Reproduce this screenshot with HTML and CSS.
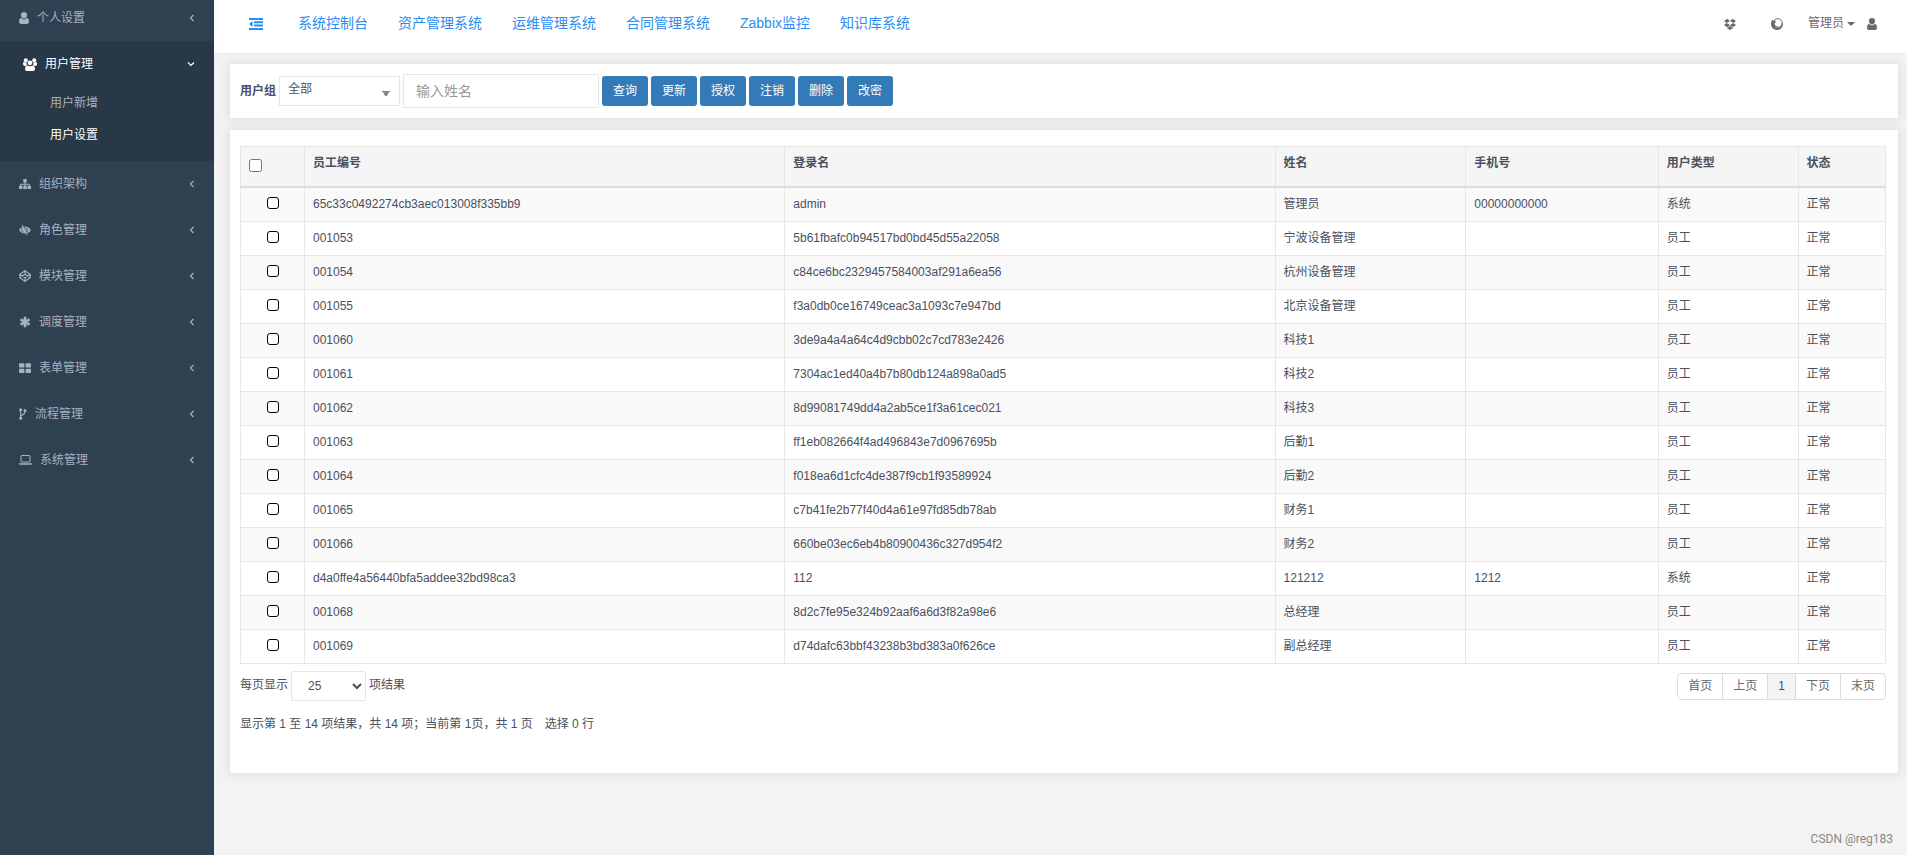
FILE: index.html
```html
<!DOCTYPE html>
<html lang="zh-CN">
<head>
<meta charset="utf-8">
<title>用户设置</title>
<link rel="stylesheet" href="styles.css">
</head>
<body>
<svg class="defs" aria-hidden="true">
  <symbol id="user" viewBox="0 0 10 12"><path d="M5 0a3 3 0 0 1 3 3.200c0 1.900-1.200 3.300-3 3.300S2 5.100 2 3.200A3 3 0 0 1 5 0zM2.200 5.700c.8 1 1.700 1.500 2.800 1.500s2-.5 2.800-1.500C9.400 6 10 7.800 10 9.800 10 11 9.300 12 8.200 12H1.800C.7 12 0 11 0 9.800 0 7.800.6 6 2.200 5.700z"/></symbol>
  <symbol id="left" viewBox="0 0 6 8"><path class="line" d="M4.500 1 1.500 4l3 3"/></symbol>
  <symbol id="down" viewBox="0 0 8 6"><path class="line" d="m1 1.500 3 3 3-3"/></symbol>
  <symbol id="users" viewBox="0 0 14 13"><circle cx="2.800" cy="2.200" r="2"/><circle cx="11.200" cy="2.200" r="2"/><path d="M0 5.800c0-1.200.4-1.700 1-1.700l2.700.5c-.3 1.200 0 2.200.4 2.700-.8.100-1.500.3-2 .8C.8 8.100 0 7.400 0 5.800zm14 0c0-1.200-.4-1.700-1-1.700l-2.700.5c.3 1.200 0 2.200-.4 2.700.8.100 1.500.3 2 .8 1.300 0 2.100-.7 2.100-2.300z"/><circle cx="7" cy="4.800" r="2.400"/><path d="M4.500 7.400c1.500 1.100 3.500 1.100 5 0 1.700.2 2.500 1.500 2.500 3.400 0 1.400-.8 2.200-2 2.200H4c-1.200 0-2-.8-2-2.200 0-1.900.8-3.200 2.500-3.400z"/></symbol>
  <symbol id="sitemap" viewBox="0 0 12 12"><path d="M4.300 1h3.400v3.400H6.500v1.300h4.200v2.100H12V11H8.500V7.800h1.200V6.700H6.500v1.100h1.200V11H4.300V7.800h1.200V6.700H2.300v1.100h1.200V11H0V7.800h1.300V5.700h4.200V4.400H4.300z"/></symbol>
  <symbol id="eye" viewBox="0 0 12 12"><path d="M0 6c1.400-2.200 3.300-3.600 6-3.600S10.600 3.800 12 6c-1.400 2.300-3.300 3.600-6 3.600S1.400 8.300 0 6z"/><path class="cut" d="m4.200.8 5 10.500M3 4.200C2.300 6 3 7.600 4.500 8.500M7.200 4c1.600.5 2 2.200 1 3.700"/><path class="thin" d="m3.200.8 5 10.500"/></symbol>
  <symbol id="codepen" viewBox="0 0 12 12"><path class="line" d="m6 .8 5.200 3.400v3.600L6 11.200.8 7.800V4.200zM6 .8v3.400m0 3.600v3.400M.8 4.200 6 7.800l5.200-3.600M.8 7.800 6 4.200l5.200 3.600"/></symbol>
  <symbol id="asterisk" viewBox="0 0 12 12"><path class="thick" d="M6 .8v10.400M1.500 3.400l9 5.200m0-5.200-9 5.200"/></symbol>
  <symbol id="large" viewBox="0 0 12 12"><path d="M.7 1.300h4c.4 0 .7.300.7.600V5c0 .3-.3.600-.7.600h-4C.3 5.600 0 5.300 0 5V1.900c0-.3.300-.6.700-.6zm6.600 0h4c.4 0 .7.300.7.600V5c0 .3-.3.600-.7.600h-4c-.4 0-.7-.3-.7-.6V1.900c0-.3.300-.6.700-.6zM.7 6.700h4c.4 0 .7.300.7.600v3.100c0 .3-.3.600-.7.600h-4c-.4 0-.7-.3-.7-.6V7.300c0-.3.300-.6.700-.6zm6.600 0h4c.4 0 .7.300.7.600v3.100c0 .3-.3.600-.7.600h-4c-.4 0-.7-.3-.7-.6V7.300c0-.3.300-.6.700-.6z"/></symbol>
  <symbol id="fork" viewBox="0 0 8 12"><path class="line" d="M1.700 2v8m4.300-7c0 3-1 3.300-2.500 4C2 7.500 1.700 8.200 1.700 9"/><circle cx="1.700" cy="1.800" r="1.500"/><circle cx="6" cy="2.500" r="1.500"/><circle cx="1.700" cy="10.200" r="1.500"/></symbol>
  <symbol id="laptop" viewBox="0 0 13 12"><path class="thin" d="M2.500 1.500h8c.3 0 .5.200.5.500v5.500c0 .3-.2.500-.5.500h-8c-.3 0-.5-.2-.5-.5V2c0-.3.200-.5.500-.5z"/><path d="M0 9.200h13v.6c0 .6-.5.900-1.200.9H1.200C.5 10.700 0 10.400 0 9.800z"/></symbol>
  <symbol id="outdent" viewBox="0 0 14 12"><path d="M0 0h14v2H0zm5 3.300h9v2H5zm0 3.300h9v2H5zM0 10h14v2H0zm3.500-7v6L0 6z"/></symbol>
  <symbol id="dropbox" viewBox="0 0 12 12"><path d="M3.400.7 6 2.900 2.600 5 0 3zm5.200 0L12 3 9.400 5 6 2.900zM2.600 5 6 7.100 3.400 9.300 0 7zm6.800 0L12 7 8.600 9.300 6 7.100zM2.700 9.500l.7.400L6 7.800l2.600 2.100.7-.4v.5L6 11.900 2.700 10z"/></symbol>
  <symbol id="firefox" viewBox="0 0 12 12"><circle class="thin" cx="6.800" cy="5" r="4.400"/><path d="M1.500 1.500 2 2.800l2.300.2.900 1-1.500 1 .1 1.500c.6 1.500 2 2.200 3.600 1.900-1 1-2.600 1-3.700.2.900 1.300 2.500 1.800 4.100 1.300 1.800-.6 3-2.200 3-4.200L12 5.300c.1 3.800-2.500 6.700-6 6.700-3.300 0-6-2.600-6-5.900C0 4.300.6 2.600 1.500 1.500z"/></symbol>
</svg>
<div class="layout">
  <aside class="sidebar">
    <nav>
      <a class="item first" href="#"><svg class="icon narrow"><use href="#user"/></svg>个人设置<svg class="chevron"><use href="#left"/></svg></a>
      <div class="group">
        <a class="item" href="#"><svg class="icon users"><use href="#users"/></svg>用户管理<svg class="chevron open"><use href="#down"/></svg></a>
        <a class="sub" href="#">用户新增</a>
        <a class="sub current" href="#">用户设置</a>
      </div>
      <a class="item" href="#"><svg class="icon"><use href="#sitemap"/></svg>组织架构<svg class="chevron"><use href="#left"/></svg></a>
      <a class="item" href="#"><svg class="icon"><use href="#eye"/></svg>角色管理<svg class="chevron"><use href="#left"/></svg></a>
      <a class="item" href="#"><svg class="icon"><use href="#codepen"/></svg>模块管理<svg class="chevron"><use href="#left"/></svg></a>
      <a class="item" href="#"><svg class="icon"><use href="#asterisk"/></svg>调度管理<svg class="chevron"><use href="#left"/></svg></a>
      <a class="item" href="#"><svg class="icon"><use href="#large"/></svg>表单管理<svg class="chevron"><use href="#left"/></svg></a>
      <a class="item" href="#"><svg class="icon slim"><use href="#fork"/></svg>流程管理<svg class="chevron"><use href="#left"/></svg></a>
      <a class="item" href="#"><svg class="icon laptop"><use href="#laptop"/></svg>系统管理<svg class="chevron"><use href="#left"/></svg></a>
    </nav>
  </aside>
  <div class="page">
    <header class="topbar">
      <button class="toggle" type="button" aria-label="收起菜单"><svg class="icon wide"><use href="#outdent"/></svg></button>
      <nav class="systems">
        <a href="#">系统控制台</a><a href="#">资产管理系统</a><a href="#">运维管理系统</a><a href="#">合同管理系统</a><a href="#">Zabbix监控</a><a href="#">知识库系统</a>
      </nav>
      <div class="tools">
        <a href="#" aria-label="消息"><svg class="icon"><use href="#dropbox"/></svg></a>
        <a href="#" aria-label="浏览"><svg class="icon"><use href="#firefox"/></svg></a>
        <a class="account" href="#">管理员<span class="caret"></span><svg class="icon narrow"><use href="#user"/></svg></a>
      </div>
    </header>
    <main class="content">
      <form class="panel filters">
        <label for="group">用户组</label>
        <select class="group-select" id="group"><option>全部</option></select>
        <input class="name-input" type="text" placeholder="输入姓名" aria-label="输入姓名">
        <button type="button">查询</button>
        <button type="button">更新</button>
        <button type="button">授权</button>
        <button type="button">注销</button>
        <button type="button">删除</button>
        <button type="button">改密</button>
      </form>
      <section class="panel listing">
        <table>
          <colgroup><col class="c-check"><col class="c-no"><col class="c-login"><col class="c-name"><col class="c-phone"><col class="c-type"><col class="c-state"></colgroup>
          <thead><tr><th><input type="checkbox" aria-label="全选"></th><th>员工编号</th><th>登录名</th><th>姓名</th><th>手机号</th><th>用户类型</th><th>状态</th></tr></thead>
          <tbody>
            <tr><td><input type="checkbox" aria-label="选择"></td><td>65c33c0492274cb3aec013008f335bb9</td><td>admin</td><td>管理员</td><td>00000000000</td><td>系统</td><td>正常</td></tr>
            <tr><td><input type="checkbox" aria-label="选择"></td><td>001053</td><td>5b61fbafc0b94517bd0bd45d55a22058</td><td>宁波设备管理</td><td></td><td>员工</td><td>正常</td></tr>
            <tr><td><input type="checkbox" aria-label="选择"></td><td>001054</td><td>c84ce6bc2329457584003af291a6ea56</td><td>杭州设备管理</td><td></td><td>员工</td><td>正常</td></tr>
            <tr><td><input type="checkbox" aria-label="选择"></td><td>001055</td><td>f3a0db0ce16749ceac3a1093c7e947bd</td><td>北京设备管理</td><td></td><td>员工</td><td>正常</td></tr>
            <tr><td><input type="checkbox" aria-label="选择"></td><td>001060</td><td>3de9a4a4a64c4d9cbb02c7cd783e2426</td><td>科技1</td><td></td><td>员工</td><td>正常</td></tr>
            <tr><td><input type="checkbox" aria-label="选择"></td><td>001061</td><td>7304ac1ed40a4b7b80db124a898a0ad5</td><td>科技2</td><td></td><td>员工</td><td>正常</td></tr>
            <tr><td><input type="checkbox" aria-label="选择"></td><td>001062</td><td>8d99081749dd4a2ab5ce1f3a61cec021</td><td>科技3</td><td></td><td>员工</td><td>正常</td></tr>
            <tr><td><input type="checkbox" aria-label="选择"></td><td>001063</td><td>ff1eb082664f4ad496843e7d0967695b</td><td>后勤1</td><td></td><td>员工</td><td>正常</td></tr>
            <tr><td><input type="checkbox" aria-label="选择"></td><td>001064</td><td>f018ea6d1cfc4de387f9cb1f93589924</td><td>后勤2</td><td></td><td>员工</td><td>正常</td></tr>
            <tr><td><input type="checkbox" aria-label="选择"></td><td>001065</td><td>c7b41fe2b77f40d4a61e97fd85db78ab</td><td>财务1</td><td></td><td>员工</td><td>正常</td></tr>
            <tr><td><input type="checkbox" aria-label="选择"></td><td>001066</td><td>660be03ec6eb4b80900436c327d954f2</td><td>财务2</td><td></td><td>员工</td><td>正常</td></tr>
            <tr><td><input type="checkbox" aria-label="选择"></td><td>d4a0ffe4a56440bfa5addee32bd98ca3</td><td>112</td><td>121212</td><td>1212</td><td>系统</td><td>正常</td></tr>
            <tr><td><input type="checkbox" aria-label="选择"></td><td>001068</td><td>8d2c7fe95e324b92aaf6a6d3f82a98e6</td><td>总经理</td><td></td><td>员工</td><td>正常</td></tr>
            <tr><td><input type="checkbox" aria-label="选择"></td><td>001069</td><td>d74dafc63bbf43238b3bd383a0f626ce</td><td>副总经理</td><td></td><td>员工</td><td>正常</td></tr>
          </tbody>
        </table>
        <div class="table-foot">
          <div class="length"><label for="length">每页显示</label><select id="length"><option>25</option></select><span>项结果</span></div>
          <nav class="pages" aria-label="分页"><a href="#">首页</a><a href="#">上页</a><a class="active" href="#">1</a><a href="#">下页</a><a href="#">末页</a></nav>
        </div>
        <p class="summary">显示第 1 至 14 项结果，共 14 项；当前第 1页，共 1 页<span>选择 0 行</span></p>
      </section>
    </main>
    <footer class="credit">CSDN @reg183</footer>
  </div>
</div>
</body>
</html>
```

FILE: styles.css
```css
* { box-sizing: border-box; }
body {
  margin: 0;
  background: #f3f3f4;
  color: #495060;
  font: 12px/17px "Liberation Sans", "Noto Sans CJK SC", sans-serif;
}
a { color: inherit; text-decoration: none; }
input, select, button { font: inherit; color: inherit; }
.defs { display: none; }
.line { fill: none; stroke: currentColor; stroke-width: 1.2; }
.thin { fill: none; stroke: currentColor; stroke-width: 1; }
.thick { fill: none; stroke: currentColor; stroke-width: 2.6; }
.cut { fill: none; stroke: #2f4050; stroke-width: 0.8; }
.icon { width: 12px; height: 12px; fill: currentColor; flex: none; }
.icon.narrow { width: 10px; }
.icon.wide { width: 14px; }
.icon.users { width: 14px; height: 13px; }
.icon.slim { width: 8px; }
.icon.laptop { width: 13px; }

.layout { display: flex; min-height: 100vh; }
.sidebar { flex: 0 0 214px; background: #2f4050; color: #a7b1c2; }
.item { display: flex; align-items: center; gap: 8px; height: 46px; padding: 0 19px; }
.item.first { height: 41px; padding-bottom: 5px; }
.chevron { width: 6px; height: 8px; margin-left: auto; }
.chevron.open { width: 8px; height: 6px; }
.group { height: 120px; background: #293846; }
.group .item { padding-left: 23px; color: #fff; }
.sub { display: block; padding: 8px 0 7px 50px; }
.sub.current { color: #fff; }

.page { flex: 1; min-width: 0; display: flex; flex-direction: column; }
.topbar { display: flex; align-items: center; height: 54px; padding: 0 30px 6px 35px; background: #fff; border-bottom: 1px solid #e7eaec; }
.toggle { display: flex; padding: 0; border: 0; background: none; color: #2d8cf0; }
.systems { display: flex; gap: 30px; margin-left: 35px; color: #2d8cf0; font-size: 14px; }
.tools { display: flex; align-items: center; gap: 35px; margin-left: auto; color: #676a6c; }
.tools a { display: flex; align-items: center; }
.tools .account { margin-left: -10px; }
.caret { margin: 0 12px 0 3px; border: 4px solid transparent; border-top-color: currentColor; border-bottom: 0; }

.content { padding: 10px 9px 0 16px; }
.panel { background: #fff; box-shadow: 0 0 10px 1px #ddd; }
.filters { display: flex; align-items: center; gap: 3px; padding: 10px; height: 54px; }
.filters label { font-weight: bold; }
.filters button { height: 30px; padding: 0; width: 46px; border: 0; border-radius: 3px; background: #337ab7; color: #fff; }
.group-select {
  appearance: none; width: 121px; height: 30px; padding: 0 8px 4px; border: 1px solid #e5e6e7; border-radius: 0;
  background: linear-gradient(to bottom right, #888 50%, transparent 50%) 106px 14px / 4px 6px no-repeat,
    linear-gradient(to bottom left, #888 50%, transparent 50%) 102px 14px / 4px 6px no-repeat, #fff;
}
.filters .name-input { width: 196px; height: 34px; padding: 0 12px; border: 1px solid #e5e6e7; border-radius: 1px; font-size: 14px; }
.name-input::placeholder { color: #999; }
.listing { margin-top: 12px; padding: 16px 12px 40px 10px; }
table { width: 100%; table-layout: fixed; border-collapse: collapse; }
th, td { border: 1px solid #e7e7e7; padding: 8px; text-align: left; vertical-align: top; }
th { height: 40px; background: #f5f5f6; border-bottom: 2px solid #ddd; }
td { height: 34px; }
td:first-child { text-align: center; padding: 9px 8px; line-height: 12px; }
th:first-child { padding-top: 12px; }
th input { margin: 0; width: 13px; height: 13px; display: block; }
td input { appearance: none; margin: 0; width: 12px; height: 12px; border: 1px solid #000; border-radius: 3px; background: #fff; }
tbody tr:nth-child(odd) { background: #f9f9f9; }
.c-check { width: 64px; }
.c-no { width: 29.2%; }
.c-login { width: 29.8%; }
.c-name { width: 11.6%; }
.c-phone { width: 11.7%; }
.c-type { width: 8.5%; }
.table-foot { display: flex; justify-content: space-between; align-items: flex-start; padding-top: 7px; }
.length { display: flex; align-items: center; gap: 3px; }
.length select { width: 75px; height: 30px; padding: 0 0 0 12px; border: 1px solid #e5e6e7; border-radius: 1px; background: #fff; }
.pages { display: flex; margin-top: 2px; color: #676a6c; }
.pages a { padding: 4px 10px; border: 1px solid #ddd; margin-left: -1px; background: #fff; }
.pages a:first-child { border-radius: 4px 0 0 4px; }
.pages a:last-child { border-radius: 0 4px 4px 0; }
.pages .active { background: #f4f4f4; color: #495060; }
.summary { margin: 15px 0 0; }
.summary span { margin-left: 12px; }
.credit { margin-top: auto; padding: 0 14px 7px; text-align: right; color: #888; font-family: Roboto, sans-serif; }
```
